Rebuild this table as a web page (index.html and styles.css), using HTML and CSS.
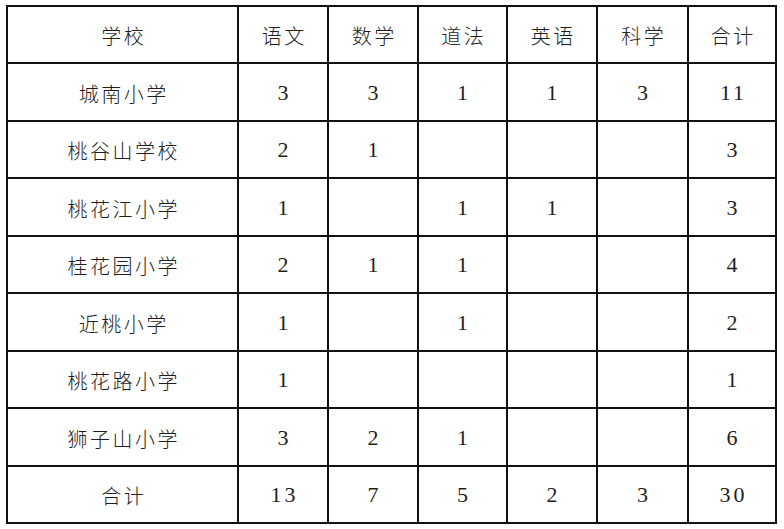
FILE: index.html
```html
<!DOCTYPE html>
<html lang="zh-CN">
<head>
<meta charset="utf-8">
<link rel="stylesheet" href="styles.css">
</head>
<body>
<table class="grid">
  <colgroup>
    <col class="c-school"><col class="c90"><col class="c90"><col class="c89"><col class="c90"><col class="c91"><col class="c88">
  </colgroup>
  <tr class="r57"><td class="zh">学校</td><td class="zh">语文</td><td class="zh">数学</td><td class="zh">道法</td><td class="zh">英语</td><td class="zh">科学</td><td class="zh">合计</td></tr>
  <tr class="r58"><td class="zh">城南小学</td><td class="num">3</td><td class="num">3</td><td class="num">1</td><td class="num">1</td><td class="num">3</td><td class="num">11</td></tr>
  <tr class="r57"><td class="zh">桃谷山学校</td><td class="num">2</td><td class="num">1</td><td></td><td></td><td></td><td class="num">3</td></tr>
  <tr class="r58"><td class="zh">桃花江小学</td><td class="num">1</td><td></td><td class="num">1</td><td class="num">1</td><td></td><td class="num">3</td></tr>
  <tr class="r57"><td class="zh">桂花园小学</td><td class="num">2</td><td class="num">1</td><td class="num">1</td><td></td><td></td><td class="num">4</td></tr>
  <tr class="r58"><td class="zh">近桃小学</td><td class="num">1</td><td></td><td class="num">1</td><td></td><td></td><td class="num">2</td></tr>
  <tr class="r57"><td class="zh">桃花路小学</td><td class="num">1</td><td></td><td></td><td></td><td></td><td class="num">1</td></tr>
  <tr class="r58"><td class="zh">狮子山小学</td><td class="num">3</td><td class="num">2</td><td class="num">1</td><td></td><td></td><td class="num">6</td></tr>
  <tr class="r57"><td class="zh">合计</td><td class="num">13</td><td class="num">7</td><td class="num">5</td><td class="num">2</td><td class="num">3</td><td class="num">30</td></tr>
</table>
</body>
</html>
```

FILE: styles.css
```css
html, body {
  margin: 0;
  padding: 0;
  background: #ffffff;
}

.grid {
  margin: 5px 0 0 6px;
  border-collapse: separate;
  border-spacing: 0;
  table-layout: fixed;
  border-top: 2px solid #111;
  border-left: 2px solid #111;
  color: #1e1e1e;
}

.c-school { width: 231px; }
.c90 { width: 90px; }
.c89 { width: 89px; }
.c91 { width: 91px; }
.c88 { width: 88px; }

.grid td {
  box-sizing: border-box;
  padding: 0;
  border-right: 2px solid #111;
  border-bottom: 2px solid #111;
  text-align: center;
  vertical-align: middle;
}

.r57 td { height: 57px; }
.r58 td { height: 58px; }

.zh {
  font-family: "Noto Sans CJK SC", "Noto Sans", sans-serif;
  font-weight: 300;
  font-size: 20px;
  letter-spacing: 2.5px;
  padding-left: 2.5px !important;
  padding-top: 2px !important;
}

.num {
  font-family: "Liberation Serif", "Times New Roman", serif;
  font-size: 22px;
  letter-spacing: 3px;
  padding-left: 3px !important;
  padding-top: 1px !important;
}
```
